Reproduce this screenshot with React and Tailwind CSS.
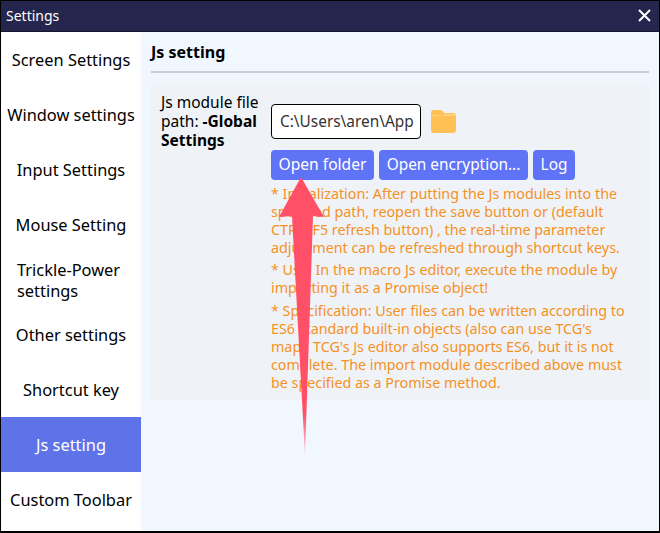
const menu = [
  'Screen Settings',
  'Window settings',
  'Input Settings',
  'Mouse Setting',
  'Trickle-Power settings',
  'Other settings',
  'Shortcut key',
  'Js setting',
  'Custom Toolbar',
];

function SideItem({ label, active }) {
  if (label === 'Trickle-Power settings') {
    return (
      <div className="flex h-[55px] items-center pl-4 text-[16.4px] leading-[21px] text-black">
        <span className="w-[122px]">{label}</span>
      </div>
    );
  }
  return (
    <div className={active
      ? 'flex h-[55px] items-center justify-center bg-[#5f73e8] pt-[2px] text-[16.4px] text-white'
      : 'flex h-[55px] items-center justify-center pt-[2px] text-[16.4px] text-black'}>
      {label}
    </div>
  );
}

export default function App() {
  return (
    <div className="relative flex h-[533px] w-[660px] flex-col overflow-hidden border border-b-2 border-black bg-white" style={{ fontFamily: '"Noto Sans", sans-serif' }}>
      <div className="flex h-[31px] shrink-0 items-center justify-between border-b border-[#14152e] bg-[#25264d] pb-[2px] pl-[5px] pr-[8px] text-[14px] text-white">
        <span>Settings</span>
        <svg width="13" height="13" viewBox="0 0 13 13">
          <path d="M1 1 L12 12 M12 1 L1 12" stroke="#fff" strokeWidth="2" />
        </svg>
      </div>
      <div className="flex min-h-0 flex-1">
        <div className="w-[140px] shrink-0 bg-white">
          {menu.map((m) => (
            <SideItem key={m} label={m} active={m === 'Js setting'} />
          ))}
        </div>
        <div className="flex-1 bg-[#f0f7ff] px-[10px]">
          <div className="flex h-[41px] items-center border-b-2 border-[#c6ccd8] text-[16px] font-bold text-black">Js setting</div>
          <div className="mt-[10px] flex h-[317px] bg-[#eff3f8] pl-[10px] pr-[10px] pt-[10px]">
            <div className="w-[110px] shrink-0 text-[15.5px] leading-[19px] text-black">
              Js module file path: <b>-Global Settings</b>
            </div>
            <div className="min-w-0 flex-1">
              <div className="mt-[11px] flex items-center">
                <div className="h-[35px] w-[150px] overflow-hidden whitespace-nowrap rounded-[4px] border border-black bg-white pl-2 text-[15.4px] leading-[33px] text-[#333]">C:\Users\aren\App</div>
                <svg className="ml-[10px]" width="25" height="23" viewBox="0 0 25 23">
                  <path d="M0 3 Q0 0 3 0 H9 Q11 0 12.5 2 L13 3 H22 Q25 3 25 6 V20 Q25 23 22 23 H3 Q0 23 0 20 Z" fill="#ffc154" />
                  <path d="M0 5 H13 L14 4 H25 V6 H0 Z" fill="#ffd27e" />
                </svg>
              </div>
              <div className="mt-[11px] flex gap-[5px]">
                <button className="h-[30px] w-[103px] rounded-[4px] bg-[#5f73f7] text-[15.6px] text-white">Open folder</button>
                <button className="h-[30px] w-[149px] rounded-[4px] bg-[#5f73f7] text-[15.4px] text-white">Open encryption...</button>
                <button className="h-[30px] w-[42px] rounded-[4px] bg-[#5f73f7] text-[15.4px] text-white">Log</button>
              </div>
              <div className="mt-[5px] w-[356px] text-[14.3px] leading-[18px] text-[#f5911f]">
                <p>* Initialization: After putting the Js modules into the specified path, reopen the save button or (default CTRL+F5 refresh button) , the real-time parameter adjustment can be refreshed through shortcut keys.</p>
                <p className="mt-[4px]">* Use: In the macro Js editor, execute the module by importing it as a Promise object!</p>
                <p className="mt-[5px]">* Specification: User files can be written according to ES6 standard built-in objects (also can use TCG's map). TCG's Js editor also supports ES6, but it is not complete. The import module described above must be specified as a Promise method.</p>
              </div>
            </div>
          </div>
        </div>
      </div>
      <svg className="pointer-events-none absolute left-[-1px] top-[-1px]" width="660" height="533" viewBox="0 0 660 533">
        <defs>
          <linearGradient id="arrowFade" x1="0" y1="177" x2="0" y2="456" gradientUnits="userSpaceOnUse">
            <stop offset="0.85" stopColor="#ff5068" />
            <stop offset="1" stopColor="#ff5068" stopOpacity="0.2" />
          </linearGradient>
        </defs>
        <path d="M301 177 L324 217 L313 216 L305 456 L292 216 L279 217 Z" fill="url(#arrowFade)" />
      </svg>
    </div>
  );
}
